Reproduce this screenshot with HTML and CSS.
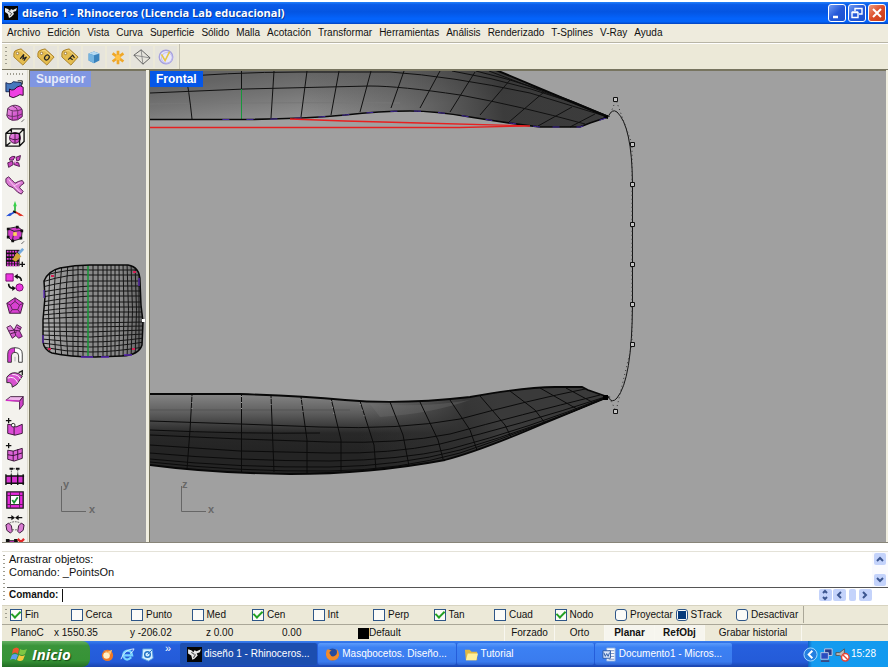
FILE: index.html
```html
<!DOCTYPE html>
<html lang="es">
<head>
<meta charset="utf-8">
<title>diseño 1 - Rhinoceros</title>
<link rel="stylesheet" href="styles.css">
</head>
<body>
<svg class="defs" width="0" height="0" aria-hidden="true">
  <defs>
    <linearGradient id="pink" x1="0" y1="0" x2="1" y2="1"><stop offset="0" stop-color="#ee9be8"/><stop offset="1" stop-color="#c32fbd"/></linearGradient>
    <linearGradient id="upper" gradientUnits="userSpaceOnUse" x1="300" y1="70" x2="306" y2="120"><stop offset="0" stop-color="#646464"/><stop offset=".4" stop-color="#747474"/><stop offset="1" stop-color="#939393"/></linearGradient>
    <linearGradient id="upperShade" gradientUnits="userSpaceOnUse" x1="300" y1="110" x2="500" y2="85"><stop offset="0" stop-color="#444" stop-opacity="0"/><stop offset=".5" stop-color="#444" stop-opacity=".45"/><stop offset="1" stop-color="#2c2c2c" stop-opacity=".85"/></linearGradient>
    <linearGradient id="lower" gradientUnits="userSpaceOnUse" x1="0" y1="394" x2="0" y2="450"><stop offset="0" stop-color="#858585"/><stop offset=".35" stop-color="#5c5c5c"/><stop offset=".7" stop-color="#282828"/><stop offset="1" stop-color="#242424"/></linearGradient>
    <linearGradient id="lowerShade" gradientUnits="userSpaceOnUse" x1="360" y1="400" x2="500" y2="400"><stop offset="0" stop-color="#383838" stop-opacity="0"/><stop offset=".75" stop-color="#303030" stop-opacity=".9"/><stop offset="1" stop-color="#3a3a3a"/></linearGradient>
    <linearGradient id="blobFill" x1="0" y1="0" x2="1" y2="0"><stop offset="0" stop-color="#b4b4b4"/><stop offset=".3" stop-color="#8a8a8a"/><stop offset=".75" stop-color="#888"/><stop offset="1" stop-color="#5c5c5c"/></linearGradient>
    <clipPath id="blobClip"><path d="M44 281Q48 271 60 268Q75 265 90 265L128 265Q140 267 140 281L141 305L143 322L142 345Q139 355 122 356L95 357Q70 357 52 353Q44 350 43 342L43 320L45 297Z"/></clipPath>
    <symbol id="rhino" viewBox="0 0 14 14"><rect width="14" height="14" fill="#050505"/><path d="M1 2l3 1 2 2 1-2 2 1 4-2-1 3-3 1 1 2-3 3-2 1-1-4-3-2z" fill="#e8e8e8"/><path d="M4 5l3 2M8 7l-2 3" stroke="#555" fill="none"/></symbol>
    <symbol id="tag" viewBox="0 0 20 20"><path d="M1 6Q1 3 5 2L9 1L19 10L11 19L1 10Z" fill="#e5bd50" stroke="#a47b20"/><path d="M3 6L6 3L9 3L17 10" fill="none" stroke="#f6dd91"/><circle cx="5" cy="6" r="1.4" fill="#fff" stroke="#94712a"/></symbol>
  </defs>
</svg>

<div class="app">
  <header class="titlebar">
    <svg class="appicon" aria-hidden="true"><use href="#rhino"/></svg>
    <h1>diseño 1 - Rhinoceros (Licencia Lab educacional)</h1>
    <div class="winbtns">
      <button aria-label="Minimizar"><svg viewBox="0 0 16 16"><path d="M4 12h5" stroke="#fff" stroke-width="2.5"/></svg></button>
      <button aria-label="Restaurar"><svg viewBox="0 0 16 16"><path d="M3 7.500h6v5H3zM3 7h6M6 6V3.500h7V9h-3M6 3.500h7" fill="none" stroke="#fff" stroke-width="1.400"/></svg></button>
      <button class="close" aria-label="Cerrar"><svg viewBox="0 0 16 16"><path d="M4 4l8 8M12 4l-8 8" stroke="#fff" stroke-width="2"/></svg></button>
    </div>
  </header>

  <nav class="menubar">
    <button>Archivo</button><button>Edición</button><button>Vista</button><button>Curva</button><button>Superficie</button><button>Sólido</button><button>Malla</button><button>Acotación</button><button>Transformar</button><button>Herramientas</button><button>Análisis</button><button>Renderizado</button><button>T-Splines</button><button>V-Ray</button><button>Ayuda</button>
  </nav>

  <div class="toolbar">
    <span class="grip"></span>
    <button aria-label="Editor de materiales"><svg viewBox="0 0 20 20"><use href="#tag"/><path d="M8 12L12 7L11 12L15 10L12 14" fill="none" stroke="#222" stroke-width="1.300"/></svg></button>
    <button aria-label="Opciones"><svg viewBox="0 0 20 20"><use href="#tag"/><ellipse cx="11" cy="10.500" rx="2.300" ry="3" transform="rotate(40 11 10.500)" fill="none" stroke="#222" stroke-width="1.300"/></svg></button>
    <button aria-label="Búfer"><svg viewBox="0 0 20 20"><use href="#tag"/><path d="M8 13l5-5 2 3M10 11l3 2" fill="none" stroke="#222" stroke-width="1.300"/></svg></button>
    <button aria-label="Proxy"><svg viewBox="0 0 20 20"><path d="M4 6l6-2 6 2v8l-6 3-6-3z" fill="#3a83bd"/><path d="M4 6l6-2 6 2-6 2z" fill="#b6daf2"/><path d="M4 6l6 2v9l-6-3z" fill="#75b4e0"/></svg></button>
    <button aria-label="Luz"><svg viewBox="0 0 20 20"><path d="M10 3v15M4 6l12 9M16 6L4 15" stroke="#efa728" stroke-width="3"/><circle cx="10" cy="10.500" r="3" fill="#ffc247"/></svg></button>
    <button aria-label="Plano infinito"><svg viewBox="0 0 20 20"><path d="M1 8l18 3M9 2l2 16" fill="none" stroke="#888"/><path d="M1 8l8-6 10 9-8 7z" fill="none" stroke="#555"/></svg></button>
    <button aria-label="Render V-Ray"><svg viewBox="0 0 20 20"><circle cx="10" cy="10" r="7.500" fill="#e8e7fa" stroke="#a5a0df" stroke-width="1.500"/><circle cx="11" cy="11" r="6" fill="none" stroke="#bdb9ed"/><path d="M5 7l4 7 5-10" fill="none" stroke="#e6c747" stroke-width="1.800"/></svg></button>
    <span class="barend"></span>
  </div>

  <main class="work">
    <aside class="tools" aria-label="Herramientas T-Splines">
      <span class="hgrip"></span>
      <button aria-label="Convertir"><svg viewBox="0 0 22 22"><path d="M1 4q5 3 8-1l9 1v10H1z" fill="#4778bd" stroke="#102050"/><path d="M5 11q4 3 8-2q4-3 7 0v9q-4-2-7 1q-4 3-8 0z" fill="#ef3ee3" stroke="#20051f"/><path d="M14 2h5v4" fill="none" stroke="#111"/></svg></button>
      <button aria-label="Caja"><svg viewBox="0 0 22 22"><path d="M3 6q5-5 11-3q4 1 5 5v7q-5 5-11 4q-5-1-6-5z" fill="url(#pink)" stroke="#472045"/><path d="M3 6q5 5 16 1M8 3q6 2 6 6v9M8 9v10M2 13q7 4 17-1" fill="none" stroke="#63305f"/><path d="M18 21l3-3" stroke="#555"/></svg></button>
      <button aria-label="Esfera"><svg viewBox="0 0 22 22"><circle cx="11" cy="12" r="6" fill="url(#pink)" stroke="#431540"/><path d="M5 12q6 4 12 0M11 6v12" stroke="#431540" fill="none"/><path d="M1 7l6-5h14v14l-5 5H1zM1 7h15v14M16 7l5-5M7 2v4M1 21l5-4" fill="none" stroke="#111" stroke-width="1.500"/></svg></button>
      <button aria-label="Plano"><svg viewBox="0 0 22 22"><path d="M5 8q3-3 6-2l-2 4H5zM12 7l5-2-1 5-3 1zM3 13l5-2 1 4-5 3zM10 12l5 1 1 4-6-2z" fill="#cc45c2" stroke="#4c174a"/><path d="M9 10l4 1-2 3z" fill="#f3b3ec"/></svg></button>
      <button aria-label="Tubo"><svg viewBox="0 0 22 22"><path d="M1 4l3-2 3 3 4 4 4-2 4-1 2 3-4 3-1 2 4 4-2 3-4-2-5-5-5-2-3-4z" fill="#dc7cd4" stroke="#4c174a"/><path d="M4 5l6 7 7-4M10 12l7 7" fill="none" stroke="#f7d6f4"/></svg></button>
      <button aria-label="Ejes"><svg viewBox="0 0 22 22"><path d="M11 13V5" stroke="#25b436" stroke-width="1.800"/><path d="M11 1l2 6H9z" fill="#35d247"/><path d="M11 13l-7 4" stroke="#2551d9" stroke-width="2"/><path d="M1 18l5-4 1 3z" fill="#2551d9"/><path d="M11 13l7 4" stroke="#df3024" stroke-width="2"/><path d="M21 18l-6-4v3z" fill="#df3024"/><path d="M9 12l3 2" stroke="#111" stroke-width="2"/></svg></button>
      <button aria-label="Editar puntos"><svg viewBox="0 0 22 22"><path d="M3 5l11-2 5 4-1 9-10 3-5-5z" fill="#d33ccb" stroke="#222"/><path d="M3 5l7 3 9-1M10 8l-2 11" stroke="#222" fill="none"/><path d="M2 4h3v3H2zM12 2h3v3h-3zM17 6h3v3h-3zM7 17h3v3H7zM16 14h3v3h-3zM2 13h3v3H2z" fill="#111"/><path d="M9 9h4v4H9z" fill="#ffd45a"/><path d="M18 22l3-3" stroke="#555"/></svg></button>
      <button aria-label="Seleccionar"><svg viewBox="0 0 22 22"><path d="M1 2h15v18H1z" fill="#111"/><path d="M2 4h13M2 8h13M2 12h13M2 16h13M2 19h13" stroke="#e640dd" stroke-width="2" stroke-dasharray="2 1"/><path d="M8 13l5-8 5 4-6 6z" fill="#d3a536"/><path d="M15 6l5-5" stroke="#74aadb" stroke-width="3"/><path d="M16 18h6M19 15v6" stroke="#111" stroke-width="1.500"/></svg></button>
      <button aria-label="Intercambiar"><svg viewBox="0 0 22 22"><path d="M1 2h8v8H1z" fill="#ed36e0" stroke="#6b1266"/><circle cx="16" cy="17" r="4" fill="#ed36e0" stroke="#6b1266"/><path d="M12 5q6 0 6 5M4 13q0 5 5 5" fill="none" stroke="#111" stroke-width="1.800"/><path d="M10 5l4-3v6zM12 18l-4-3v6z" fill="#111"/></svg></button>
      <button aria-label="Cara"><svg viewBox="0 0 22 22"><path d="M11 2l9 6-3 11H5L2 8z" fill="#d940d2" stroke="#3c1739"/><path d="M11 6l5 4-2 5H8l-2-5zM11 2v4M20 8l-4 2M17 19l-3-4M5 19l3-4M2 8l4 2" fill="none" stroke="#532450"/></svg></button>
      <button aria-label="Subdividir"><svg viewBox="0 0 22 22"><path d="M2 7l4-2 4 5 3-6 5 3-2 4 3 6-4 2-3-3-4 3z" fill="url(#pink)" stroke="#451443"/><path d="M4 11l6-1 6 1M10 10l2 6M6 14l7-2M13 7l4 2" fill="none" stroke="#451443"/></svg></button>
      <button aria-label="Puente"><svg viewBox="0 0 22 22"><path d="M3 19V10q0-7 8-7v5q-4 0-4 4v7z" fill="#d83bd1" stroke="#333"/><path d="M11 3q8 0 8 7v9h-4v-7q0-4-4-4" fill="#fff" stroke="#333"/><path d="M11 13v5" stroke="#aaa"/></svg></button>
      <button aria-label="Soldar"><svg viewBox="0 0 22 22"><path d="M2 9q5-7 13-4l4 3-6 9-5 3q0-6-6-5z" fill="#d752cf" stroke="#222"/><path d="M3 10q7-3 11 5M8 6q7 0 9 5" fill="none" stroke="#fff"/><path d="M15 4l4-2v5" fill="none" stroke="#222" stroke-width="1.500"/></svg></button>
      <button aria-label="Pliegue"><svg viewBox="0 0 22 22"><path d="M1 8l5-4h14l-4 5z" fill="#efb7eb" stroke="#411e40"/><path d="M20 4v9l-4 5V9z" fill="#cf43ca" stroke="#411e40"/><path d="M1 8l15 1" stroke="#d22fc8" stroke-width="1.500"/></svg></button>
      <button aria-label="Insertar punto"><svg viewBox="0 0 22 22"><path d="M3 8l6 1 3 2 7-3v10l-8 2-8-2z" fill="#dd4cd7" stroke="#30102e"/><path d="M10 10v10" stroke="#30102e"/><circle cx="9" cy="9" r="2" fill="#fff" stroke="#222"/><path d="M1 4h6M4 1v6" stroke="#111" stroke-width="1.400"/></svg></button>
      <button aria-label="Insertar borde"><svg viewBox="0 0 22 22"><path d="M3 9l6 1 10-3v11l-9 3-7-2z" fill="#dd63d7" stroke="#30102e"/><path d="M3 14l6 1 10-3M9 10v11M14 8v11" fill="none" stroke="#30102e"/><path d="M1 4h6M4 1v6" stroke="#111" stroke-width="1.400"/></svg></button>
      <button aria-label="Extruir"><svg viewBox="0 0 22 22"><path d="M1 11h20v8H1z" fill="#d832d0"/><path d="M1 11h20M1 19h20M1 9v12M7 9v12M14 9v12M20 9v12" stroke="#111" stroke-width="1.500"/><path d="M7 10V3h7v7" fill="none" stroke="#555" stroke-dasharray="2 1"/><path d="M5 2h4v2H5zM12 2h4v2h-4z" fill="#111"/></svg></button>
      <button aria-label="Estándar"><svg viewBox="0 0 22 22"><path d="M2 2h18v18H2z" fill="#e72adc" stroke="#222" stroke-width="1.500"/><path d="M6 2v18M16 2v18M2 6h18M2 16h18" stroke="#5c1558"/><path d="M6 6h10v10H6z" fill="#fff" stroke="#222"/><path d="M8 11l2 3 4-6" fill="none" stroke="#13942d" stroke-width="2"/></svg></button>
      <button aria-label="Simetría"><svg viewBox="0 0 22 22"><path d="M3 4h5M19 4h-5" stroke="#111" stroke-width="1.500"/><path d="M7 1l4 3-4 3zM15 1l-4 3 4 3z" fill="#111"/><path d="M1 12l3-2 3 3 1 6-2 2-4-3zM21 12l-3-2-3 3-1 6 2 2 4-3z" fill="#d97cd2" stroke="#30102e"/><path d="M5 10q6-3 12 0M8 17q3 1 6 0" fill="none" stroke="#555" stroke-dasharray="2 1"/></svg></button>
      <button aria-label="Quitar"><svg viewBox="0 0 22 22"><path d="M3 3h10v10H3z" fill="#d832d0" stroke="#111"/><path d="M1 1h4v4H1zM10 1h4v4h-4z" fill="#111"/><path d="M14 1l7 7M21 1l-7 7" stroke="#e12727" stroke-width="2.500"/></svg></button>
    </aside>

    <section class="viewport side">
      <h2>Superior</h2>
      <svg class="scene" aria-hidden="true"><g transform="translate(-30 -71)">
        <g clip-path="url(#blobClip)">
          <rect x="40" y="262" width="106" height="98" fill="url(#blobFill)"/>
          <path d="M50 262Q47 310 50 360M56 262Q52 310 56 360M62 262Q57 310 62 360M68 262Q64 310 68 360M73 262V360M78 262V360M83 262V360M93 262V360M98 262V360M103 262V360M107 262V360M111 262V360M115 262V360M119 262Q120 310 119 360M123 262Q125 310 123 360M127 262Q130 310 127 360M131 262Q134 310 131 360M135 262Q138 310 135 360M139 270V360
          M42 276Q70 268 90 270H144M42 282Q70 273 90 275H144M42 287Q70 280 90 281H144M42 292Q70 287 90 286H144M42 297Q70 292 90 291H144M42 302Q70 297 90 296H144M42 306Q70 302 90 302H144M42 311Q70 307 90 307H144M42 315Q70 312 90 312H144M42 319Q70 317 90 317H144M42 323H90L144 322M42 327H90L144 326M42 331L90 332L144 330M42 335L90 337L144 334M42 339Q66 342 90 342T144 338M42 343Q66 347 90 347T144 342M42 347Q66 352 90 352T144 347" fill="none" stroke="#151515" stroke-width="1"/>
          <path d="M88 264V358" stroke="#159535" stroke-width="1.500"/>
        </g>
        <path d="M44 281Q48 271 60 268Q75 265 90 265L128 265Q140 267 140 281L141 305L143 322L142 345Q139 355 122 356L95 357Q70 357 52 353Q44 350 43 342L43 320L45 297Z" fill="none" stroke="#080808" stroke-width="1.500"/>
        <path d="M44 290V298M43 335V343M81 357h12M101 357h8M139 278v8M124 355h8" stroke="#5b28b8" stroke-width="1.300"/>
        <path d="M51 276h3M133 272h3M48 349h3M132 349h3" stroke="#d32154" stroke-width="2"/>
        <path d="M142 319h3v3h-3z" fill="#fff"/>
        <path d="M61.500 486V511.500H86" fill="none" stroke="#666"/>
        <text x="63" y="488">y</text><text x="89" y="513">x</text>
      </g></svg>
    </section>

    <section class="viewport front">
      <h2>Frontal</h2>
      <svg class="scene" aria-hidden="true"><g transform="translate(-150 -71)">
        <path d="M150 70H496L608 117L590 123L580 127L540 127Q500 122 470 117Q435 111 410 111Q380 111 345 115Q300 119 245 119.500H150Z" fill="url(#upper)"/>
        <path d="M150 70H496L608 117L590 123L580 127L540 127Q500 122 470 117Q435 111 410 111Q380 111 345 115Q300 119 245 119.500H150Z" fill="url(#upperShade)"/>
        <path d="M150 104Q300 102 400 103" fill="none" stroke="#777"/>
        <path d="M150 79Q230 72 300 72L390 72Q450 76 530 93L608 117M150 93L245 89L370 86Q400 86 460 95Q520 106 585 124M452 71Q530 84 608 116M476 71Q540 86 608 116M489 71Q550 94 608 117" fill="none" stroke="#111"/>
        <path d="M185 71Q189 90 192 119M241.500 71V89M274 71L271 118M307 71L301 117M339 71L331 115M371 71L360 112M404 71L391 108M440 71L420 108M475 72L450 112M510 80L480 115M544 92L509 122M572 107L538 126M595 114L570 127" fill="none" stroke="#111"/>
        <path d="M241.500 89V119" stroke="#17963b" stroke-width="1"/>
        <path d="M496 70L608 117" stroke="#080808" stroke-width="2"/>
        <path d="M608 117L590 123L580 127L540 127Q500 122 470 117Q435 111 410 111Q380 111 345 115Q300 119 245 119.500H150" fill="none" stroke="#080808" stroke-width="1.700"/>
        <path d="M540 127Q500 122 470 117Q435 111 410 111Q380 111 345 115Q300 119 245 119.500H210M606 118L580 127H545" fill="none" stroke="#40279a" stroke-dasharray="7 17"/>
        <path d="M603 117l5-2v4z"/>
        <path d="M150 127.500H459L530 126M290 119L345 121L420 123L530 126" fill="none" stroke="#e62020" stroke-width="1.300"/>

        <path d="M150 394H240Q300 396 345 400Q400 405 470 397Q525 387 555 387H582L588 390L608 397L545 423Q480 451 445 460Q370 474 290 474Q210 473 150 465Z" fill="url(#lower)"/>
        <path d="M150 394H240Q300 396 345 400Q400 405 470 397Q525 387 555 387H582L588 390L608 397L545 423Q480 451 445 460Q370 474 290 474Q210 473 150 465Z" fill="url(#lowerShade)"/>
        <path d="M370 404Q425 408 470 400Q430 414 380 417Z" fill="#777" opacity=".3"/>
        <path d="M150 410H350" stroke="#555"/>
        <path d="M150 421L240 424L320 427Q400 430 460 419Q530 400 585 389M150 435L240 439L330 442Q400 444 450 434Q520 415 600 395M150 445L240 451L330 453Q390 454 440 444Q520 425 605 397M150 453Q240 461 330 461Q400 460 450 449Q530 428 606 397M150 459Q240 468 330 467Q400 466 460 450Q540 426 608 397M150 462Q240 472 330 471Q400 470 460 453Q540 426 608 397M150 430Q240 434 320 433" fill="none" stroke="#0b0b0b"/>
        <path d="M192 395L190 430L187 469M241.500 394V472M271 396L274 472M301 397L307 440V473M331 398L341 440V472M360 401L374 445L376 470M390 402L403 435L409 466M420 402L438 440L443 459M450 400L470 430L477 450M480 396L505 425L511 437M510 391L535 410L545 423M540 388L577 409M566 388L592 402" fill="none" stroke="#0b0b0b"/>
        <path d="M192 396V410M241.500 396V410M271 398V410M301 399L303 412M331 401L334 415M360 404L365 418" stroke="#999" stroke-dasharray="1 5"/>
        <path d="M150 394H240Q300 396 345 400Q400 405 470 397Q525 387 555 387H582L588 390L608 397L545 423Q480 451 445 460Q370 474 290 474Q210 473 150 465" fill="none" stroke="#080808" stroke-width="1.800"/>
        <path d="M603 395h5v5h-5z"/>

        <path d="M608 117Q612 108 617 112Q632 126 632.500 184V304Q632 380 617 398Q612 404 608 397" fill="none" stroke="#151515"/>
        <path d="M609 117L616 100L632 144V344L616 411L609 397" fill="none" stroke="#333" stroke-dasharray="1 3"/>
        <g fill="#c4c4c4" stroke="#111"><path d="M613.500 97.500h4v4h-4zM630.500 142.500h4v4h-4zM630.500 182.500h4v4h-4zM630.500 222.500h4v4h-4zM630.500 262.500h4v4h-4zM630.500 302.500h4v4h-4zM630.500 342.500h4v4h-4zM613.500 409.500h4v4h-4z"/></g>
        <path d="M181.500 486V511.500H206" fill="none" stroke="#666"/>
        <text x="182" y="488">z</text><text x="208" y="513">x</text>
      </g></svg>
    </section>
  </main>

  <section class="command">
    <span class="grip"></span>
    <div class="cmdmain">
      <div class="history">
        <div class="log"><p>Arrastrar objetos:</p><p>Comando: _PointsOn</p></div>
        <div class="vscroll">
          <button class="sb" aria-label="Subir"><svg viewBox="0 0 12 12"><path d="M3 8l3-3 3 3"/></svg></button>
          <button class="sb" aria-label="Bajar"><svg viewBox="0 0 12 12"><path d="M3 4l3 3 3-3"/></svg></button>
        </div>
      </div>
      <div class="prompt">
        <label for="cmd">Comando:</label><span class="caret"></span><input id="cmd" type="text">
        <button class="sb" aria-label="Historial"><svg viewBox="0 0 12 12"><path d="M4 4l2-2 2 2M4 8l2 2 2-2"/></svg></button>
        <button class="sb" aria-label="Izquierda"><svg viewBox="0 0 12 12"><path d="M8 3L5 6l3 3"/></svg></button>
        <span class="thumb"></span>
        <button class="sb" aria-label="Derecha"><svg viewBox="0 0 12 12"><path d="M4 3l3 3-3 3"/></svg></button>
      </div>
    </div>
  </section>

  <div class="osnap">
    <span class="grip"></span>
    <div class="snaps">
      <label><input type="checkbox" checked>Fin</label>
      <label><input type="checkbox">Cerca</label>
      <label><input type="checkbox">Punto</label>
      <label><input type="checkbox">Med</label>
      <label><input type="checkbox" checked>Cen</label>
      <label><input type="checkbox">Int</label>
      <label><input type="checkbox">Perp</label>
      <label><input type="checkbox" checked>Tan</label>
      <label><input type="checkbox">Cuad</label>
      <label><input type="checkbox" checked>Nodo</label>
      <label class="push"><input type="checkbox">Proyectar</label>
      <label class="push"><input type="checkbox" checked>STrack</label>
      <label class="push"><input type="checkbox">Desactivar</label>
    </div>
  </div>

  <div class="status">
    <span class="plane">PlanoC</span><span class="coord">x 1550.35</span><span class="coord">y -206.02</span><span class="coord">z 0.00</span><span class="coord">0.00</span>
    <span class="layer"><i></i>Default</span>
    <button class="pane">Forzado</button><button class="pane">Orto</button><button class="pane on">Planar</button><button class="pane on">RefObj</button><button class="pane wide">Grabar historial</button>
  </div>

  <footer class="taskbar">
    <button class="start"><svg viewBox="0 0 18 18"><path d="M3 4q4-3 6 0L8 9q-3-3-6 0z" fill="#ed562f"/><path d="M10 4q3 2 7 0l-2 5q-3 2-6 0z" fill="#7fc744"/><path d="M2 10q3-2 6 0l-2 5q-3-2-6 0z" fill="#5c9df0"/><path d="M9 10q3 2 6 0l-2 5q-3 2-6 0z" fill="#f4ca3d"/></svg>Inicio</button>
    <div class="quick">
      <button aria-label="Reproductor"><svg viewBox="0 0 16 16"><circle cx="8" cy="9" r="6" fill="#ee7825"/><circle cx="7" cy="9" r="3.500" fill="#fff0c7"/><path d="M3 3l5 2 5-2-2 5" fill="#ffc068"/></svg></button>
      <button aria-label="Internet Explorer"><svg viewBox="0 0 16 16"><path d="M12 11q-5 5-8 0q-2-5 3-7q5-1 6 5H4" fill="none" stroke="#77d4ff" stroke-width="2.300"/><path d="M1 13Q5 2 15 2q-1 3-4 5" fill="none" stroke="#d7eeff"/></svg></button>
      <button aria-label="Mostrar escritorio"><svg viewBox="0 0 16 16"><path d="M3 2h10l1 10-5 3-7-3z" fill="#d4efff" stroke="#539de0"/><circle cx="8" cy="8" r="3" fill="none" stroke="#2171c5" stroke-width="1.500"/><path d="M8 8l5-5" stroke="#2171c5"/></svg></button>
      <span class="more">»</span>
    </div>
    <div class="tasks">
      <button class="active"><svg><use href="#rhino"/></svg>diseño 1 - Rhinoceros...</button>
      <button><svg viewBox="0 0 16 16"><circle cx="8" cy="8" r="6.500" fill="#244b9e"/><path d="M2 3q-3 8 3 11q8 2 10-5q0-5-3-7q2 5-1 7q-4 3-6-2q-1-2 2-3q-3-2-5-1z" fill="#f28a28"/></svg>Masqbocetos. Diseño...</button>
      <button><svg viewBox="0 0 16 16"><path d="M1 3h5l2 2h6v9H2z" fill="#e0b945"/><path d="M4 7h11l-2 7H2z" fill="#fff09b"/></svg>Tutorial</button>
      <button><svg viewBox="0 0 16 16"><path d="M5 1h9v14H5z" fill="#fff" stroke="#82a7df"/><path d="M7 4h6M9 7h4M9 10h4M7 13h6" stroke="#6b87bd"/><path d="M1 4h8v8H1z" fill="#dce8fb" stroke="#2856a2"/><path d="M2 6l1.500 4L5 7l1.500 3L8 6" fill="none" stroke="#2856a2"/></svg>Documento1 - Micros...</button>
    </div>
    <div class="tray">
      <button aria-label="Mostrar iconos ocultos"><svg viewBox="0 0 16 16"><circle cx="8" cy="8" r="7" fill="#237fe0" stroke="#a9ddff"/><path d="M10 4L6 8l4 4" fill="none" stroke="#fff" stroke-width="2"/></svg></button>
      <svg viewBox="0 0 16 16" aria-hidden="true"><path d="M6 2h8v7H6z" fill="#273b8c" stroke="#c3cee8"/><path d="M2 6h8v7H2z" fill="#2a4cc0" stroke="#bac8e3"/><path d="M2 15h9" stroke="#394c86" stroke-width="2"/></svg>
      <svg viewBox="0 0 16 16" aria-hidden="true"><path d="M1 6h4l5-4v11l-5-4H1z" fill="#bbb" stroke="#555"/><circle cx="11" cy="11" r="4" fill="#fff" stroke="#e74435" stroke-width="1.500"/><path d="M8 8l6 6" stroke="#e74435" stroke-width="1.500"/></svg>
      <time>15:28</time>
    </div>
  </footer>
</div>
</body>
</html>
```

FILE: styles.css
```css
* { box-sizing: border-box; }
body { margin: 0; background: #fff; font: 10px/14px "Liberation Sans", Arial, sans-serif; color: #111; }
button { font: inherit; color: inherit; border: 0; padding: 0; margin: 0; background: none; white-space: nowrap; }
h1, h2, p { margin: 0; }
svg { display: block; }
.defs { position: absolute; }
.app { display: flex; flex-direction: column; height: 100vh; padding: 2px; overflow: hidden; }
.app > * { flex: none; }

.titlebar { display: flex; align-items: center; gap: 4px; height: 22px; padding: 0 2px; color: #fff;
  background: linear-gradient(#2382fb 0, #0a5be9 12%, #0455e2 45%, #0463fb 75%, #0363f8 90%, #0341bb); }
.appicon { width: 14px; height: 14px; }
.titlebar h1 { font: bold 11px/18px "Open Sans", "Noto Sans", sans-serif; text-shadow: 1px 1px #083a9c; white-space: nowrap; }
.winbtns { display: flex; gap: 2px; margin-left: auto; }
.winbtns button { width: 18px; height: 18px; border: 1px solid #fff; border-radius: 3px; background: linear-gradient(135deg, #739cf2, #2559d9 50%, #1b50cf); }
.winbtns .close { background: linear-gradient(135deg, #ee9b80, #dc4c28 50%, #c83c17); }

.menubar { display: flex; gap: 7px; height: 19px; padding: 0 5px; align-items: center; background: #eeebdd; border-bottom: 1px solid #b8b5a6; }

.toolbar { display: flex; align-items: center; gap: 2px; height: 27px; padding-left: 2px; background: #ece9d8; border-top: 1px solid #fff; border-bottom: 1px solid #77745f; }
.toolbar button { width: 22px; height: 22px; background: #e6e4dc; }
.toolbar svg { width: 18px; height: 18px; margin: 0 auto; }
.grip { flex: none; width: 3px; margin: 3px 1px; align-self: stretch; background: repeating-linear-gradient(#9f9d90 0 1px, transparent 1px 4px) no-repeat 0 0 / 2px 100%; }
.barend { align-self: stretch; border-left: 1px solid #c5c2b2; }

.app > .work { flex: 1 1 0; display: flex; min-height: 0; background: #f0eee0; border-bottom: 1px solid #888579; }
.tools { width: 26px; overflow: hidden; background: #f3f2ed; border-right: 1px solid #dedbd0; }
.hgrip { display: block; height: 4px; margin: 3px 4px 0 5px; background: repeating-linear-gradient(90deg, #9f9d90 0 1px, transparent 1px 3px) no-repeat 0 0 / 100% 2px; }
.tools button { display: grid; place-items: center; width: 26px; height: 24px; }
.tools button:nth-of-type(5n) { margin-bottom: 1px; }
.tools svg { width: 20px; height: 20px; }
.viewport { position: relative; background: #a0a0a0; border: solid #77745f; border-width: 1px 0 0 1px; overflow: hidden; }
.side { width: 117px; margin-left: 1px; }
.front { flex: 1; margin: 0 2px 0 3px; }
.viewport h2 { position: absolute; left: 0; top: 0; padding: 0 6px; font: bold 12px/16px "Liberation Sans", Arial, sans-serif; color: #fff; background: #0557e8; }
.side h2 { color: #e7ebfa; background: #8096e2; }
.scene { width: 100%; height: 100%; }
.scene text { font: bold 11px "Liberation Sans", Arial, sans-serif; fill: #686868; }

.command { display: flex; margin-top: 8px; height: 54px; background: #fff; border-top: 1px solid #e4e2d8; }
.cmdmain { flex: 1; display: flex; flex-direction: column; min-width: 0; }
.history { display: flex; flex: 1; border-bottom: 1px solid #555; }
.log { flex: 1; padding: 1px 2px; font-size: 11px; line-height: 13px; }
.vscroll { display: flex; flex-direction: column; justify-content: space-between; padding: 1px 2px; background: #fafafe; }
.prompt { display: flex; align-items: center; height: 17px; gap: 1px; padding: 0 16px 3px 0; }
.prompt label { padding-left: 2px; font-weight: bold; }
.caret { width: 1px; height: 13px; margin-left: 3px; background: #111; }
.prompt input { flex: 1; min-width: 0; border: 0; padding: 0; outline: 0; font: inherit; }
.sb { width: 12px; height: 12px; border-radius: 2px; background: #c4d3fb; }
.sb svg { width: 12px; height: 12px; fill: none; stroke: #3c5690; stroke-width: 2; }
.thumb { width: 7px; height: 12px; margin: 0 2px; border-radius: 2px; background: #c4d3fb; }
.prompt .sb { width: 13px; }

.osnap { display: flex; height: 19px; padding-bottom: 1px; background: #ece9d8; border-top: 1px solid #d7d3c0; }
.osnap .grip { margin-left: 3px; }
.snaps { display: grid; grid-template-columns: repeat(12, minmax(0, 1fr)) 67px; flex: 0 1 794px; margin-left: 1px; border-right: 1px solid #aaa798; }
.snaps label { display: flex; align-items: center; gap: 3px; white-space: nowrap; }
.snaps input { appearance: none; flex: none; display: grid; place-items: center; width: 12px; height: 12px; margin: 0; border: 1px solid #2e5688; background: #fbfbf8; }
.snaps input:checked::before { content: ""; width: 4px; height: 7px; margin-top: -2px; border: solid #22a022; border-width: 0 2px 2px 0; transform: rotate(45deg); }
.snaps .push input { border-radius: 3px; }
.snaps .push input:checked::before { width: 8px; height: 8px; margin: 0; border: 0; transform: none; background: #073b7b; }

.status { display: flex; align-items: stretch; height: 17px; line-height: 16px; background: #ece9d8; border-top: 1px solid #aaa798; }
.plane { width: 52px; padding-left: 9px; }
.coord { width: 76px; }
.layer { display: flex; flex: 0 0 146px; align-items: center; }
.layer i { width: 11px; height: 11px; background: #000; }
.pane { width: 50px; border-left: 1px solid #f8f7f0; }
.pane.on { font-weight: bold; background: #f6f5ee; }
.pane.wide { width: 98px; border-right: 1px solid #f8f7f0; }

.taskbar { display: flex; height: 26px; color: #fff; background: linear-gradient(#3a80ee 0, #2660de 15%, #245bd8 80%, #1a44ad); }
.start { display: flex; align-items: center; gap: 4px; width: 88px; padding-left: 8px; border-radius: 0 8px 8px 0; font: italic bold 15px/20px "Open Sans", "Noto Sans", sans-serif; text-shadow: 1px 1px 1px #174a17; background: linear-gradient(#66b064 0, #3a943a 18%, #369336 75%, #226c24); }
.start svg { width: 18px; height: 18px; }
.quick { display: flex; align-items: center; gap: 5px; width: 90px; padding-left: 10px; }
.quick svg, .tray svg { width: 15px; height: 15px; }
.more { align-self: flex-start; margin-left: 5px; font-size: 11px; }
.tasks { display: flex; gap: 1px; flex: 0 1 552px; align-items: center; }
.tasks button { display: flex; align-items: center; gap: 2px; flex: 1 1 0; min-width: 0; height: 22px; padding-left: 7px; border-radius: 2px; overflow: hidden; background: linear-gradient(#5b9bfb 0, #3c81f3 20%, #3a7bee 85%, #2c61ce); }
.tasks svg { flex: none; width: 15px; height: 15px; }
.tasks .active { background: #1c4eaf; }
.tray { display: flex; align-items: center; gap: 1px; margin-left: auto; width: 88px; padding: 0 12px 0 3px; background: linear-gradient(90deg, transparent 8px, #0d62c0 8px, #159bef 12px, #129aef); }
.tray time { margin-left: auto; }
```
